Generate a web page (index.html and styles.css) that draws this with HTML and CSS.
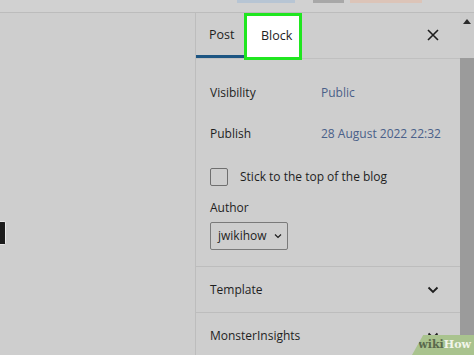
FILE: index.html
```html
<!DOCTYPE html>
<html lang="en">
<head>
    <meta charset="UTF-8">
    <title>Post settings</title>
    <link rel="stylesheet" href="styles.css">
</head>
<body>
<div class="topbar">
    <span class="chip chip-blue"></span>
    <span class="chip chip-gray"></span>
    <span class="chip chip-peach"></span>
</div>
<div class="main">
    <div class="canvas">
        <span class="handle"></span>
    </div>
    <div class="sidebar">
        <div class="tabs">
            <div class="tab active">Post</div>
            <div class="tab highlight">Block</div>
            <div class="close">
                <svg width="12" height="12" viewBox="0 0 12 12"><path d="M1 1L11 11M11 1L1 11" stroke="#1e1e1e" stroke-width="1.6"/></svg>
            </div>
        </div>
        <div class="panel">
            <div class="row">
                <span class="label">Visibility</span>
                <span class="value">Public</span>
            </div>
            <div class="row">
                <span class="label">Publish</span>
                <span class="value">28 August 2022 22:32</span>
            </div>
            <label class="check">
                <span class="box"></span>
                Stick to the top of the blog
            </label>
            <div class="author">Author</div>
            <div class="select">jwikihow
                <svg width="10" height="6" viewBox="0 0 10 6"><path d="M2 1.5L5 4.5L8 1.5" stroke="#1e1e1e" stroke-width="1.2" fill="none"/></svg>
            </div>
        </div>
        <div class="section">
            <span>Template</span>
            <svg width="12" height="8" viewBox="0 0 12 8"><path d="M1.5 1.5L6 6L10.5 1.5" stroke="#1e1e1e" stroke-width="1.8" fill="none"/></svg>
        </div>
        <div class="section">
            <span>MonsterInsights</span>
            <svg width="12" height="8" viewBox="0 0 12 8"><path d="M1.5 1.5L6 6L10.5 1.5" stroke="#1e1e1e" stroke-width="1.8" fill="none"/></svg>
        </div>
    </div>
    <div class="scrollbar">
        <div class="track">
            <svg width="8" height="5" viewBox="0 0 8 5"><path d="M0 5L4 0L8 5Z" fill="#2a2a2a"/></svg>
        </div>
        <div class="thumb"></div>
    </div>
</div>
<div class="wikihow"><span class="wiki">wiki</span><span class="how">How</span></div>
</body>
</html>
```

FILE: styles.css
```css
html, body {
    margin: 0;
    height: 100%;
    overflow: hidden;
}

body {
    font-family: "Open Sans", "Noto Sans", sans-serif;
    font-size: 12px;
    line-height: 16px;
    color: #1e1e1e;
    background-color: #cecece;
    display: flex;
    flex-direction: column;
}

.topbar {
    height: 12px;
    flex: none;
    background-color: #d1d1d1;
    border-bottom: 1px solid #bcbcbc;
    display: flex;
    align-items: flex-start;
    padding-left: 237px;
}

.chip {
    height: 3px;
    display: block;
}

.chip-blue {
    width: 58px;
    background-color: #b7c5d4;
}

.chip-gray {
    width: 31px;
    margin-left: 18px;
    background-color: #a8a8a8;
}

.chip-peach {
    width: 72px;
    margin-left: 6px;
    background-color: #dcc4b8;
}

.main {
    flex: 1;
    display: flex;
    min-height: 0;
}

.canvas {
    width: 195px;
    flex: none;
    display: flex;
    align-items: flex-start;
}

.handle {
    width: 5px;
    height: 22px;
    margin-top: 208px;
    background-color: #1c1c1c;
    border: 1px solid #e8e8e8;
    border-left: none;
    border-radius: 0 2px 2px 0;
}

.sidebar {
    width: 264px;
    flex: none;
    border-left: 1px solid #bdbdbd;
    display: flex;
    flex-direction: column;
}

.tabs {
    height: 45px;
    flex: none;
    display: flex;
    align-items: stretch;
    border-bottom: 1px solid #c0c0c0;
}

.tab {
    display: flex;
    align-items: center;
    padding: 0 0 2px 13px;
    font-size: 12.5px;
    box-sizing: border-box;
}

.tab.active {
    width: 48px;
    box-shadow: inset 0 -3px 0 #1d5582;
}

.tab.highlight {
    width: 58px;
    padding-left: 14px;
    margin-bottom: -2px;
    background-color: #fff;
    border: 3px solid #20e620;
}

.close {
    margin-left: auto;
    width: 54px;
    display: flex;
    align-items: center;
    justify-content: center;
    padding-bottom: 2px;
}

.panel {
    padding: 26px 14px 16px 14px;
    border-bottom: 1px solid #bdbdbd;
}

.row {
    display: flex;
    height: 41px;
    align-items: flex-start;
    white-space: nowrap;
}

.label {
    width: 111px;
}

.value {
    color: #4a6089;
}

.check {
    display: flex;
    align-items: center;
    gap: 12px;
    height: 20px;
}

.box {
    width: 16px;
    height: 16px;
    border: 1px solid #6f6f6f;
    border-radius: 2px;
}

.author {
    margin-top: 13px;
}

.select {
    margin-top: 6px;
    width: 78px;
    height: 28px;
    box-sizing: border-box;
    border: 1px solid #7a7a7a;
    border-radius: 2px;
    display: flex;
    align-items: center;
    gap: 6px;
    padding-left: 7px;
}

.section {
    height: 45px;
    flex: none;
    display: flex;
    align-items: center;
    justify-content: space-between;
    padding: 0 21px 0 14px;
    border-bottom: 1px solid #bdbdbd;
}

.scrollbar {
    flex: 1;
    display: flex;
    flex-direction: column;
}

.track {
    height: 45px;
    flex: none;
    display: flex;
    justify-content: center;
    padding-top: 6px;
    box-sizing: border-box;
    background-color: #cbcbcb;
}

.thumb {
    flex: 1;
    background-color: #9b9b9b;
}

.wikihow {
    position: absolute;
    right: 0;
    bottom: 0;
    width: 62px;
    height: 20px;
    background-color: #a9c38e;
    clip-path: polygon(18% 0, 100% 0, 100% 100%, 0 100%);
    font-family: "DejaVu Serif", serif;
    font-weight: bold;
    font-size: 11px;
    display: flex;
    align-items: center;
    justify-content: flex-end;
    padding-right: 3px;
    box-sizing: border-box;
}

.wiki {
    color: #5a6a4c;
}

.how {
    color: #f1f5ea;
}
```
